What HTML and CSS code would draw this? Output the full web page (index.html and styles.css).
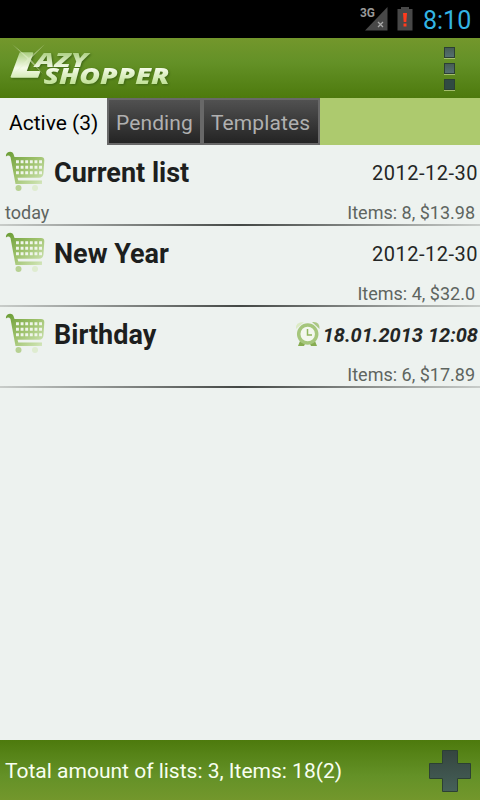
FILE: index.html
```
<!DOCTYPE html>
<html lang="en">
<head>
    <meta charset="UTF-8">
    <meta name="viewport" content="width=device-width, initial-scale=1.0">
    <title>Lazy Shopper</title>
    <link rel="stylesheet" href="styles.css">
</head>
<body>
    <!-- shared icons -->
    <svg class="defs" width="0" height="0">
        <defs>
            <linearGradient id="cartFill" gradientUnits="userSpaceOnUse" x1="4" y1="2" x2="38" y2="42">
                <stop offset="0" stop-color="#6fa03a"/>
                <stop offset="0.4" stop-color="#9cc069"/>
                <stop offset="0.75" stop-color="#c5dda6"/>
                <stop offset="1" stop-color="#e9f2df"/>
            </linearGradient>
            <linearGradient id="metal" x1="0" y1="0" x2="0" y2="1">
                <stop offset="0" stop-color="#35453f"/>
                <stop offset="1" stop-color="#466059"/>
            </linearGradient>
        </defs>
        <symbol id="cart" viewBox="0 0 40 40">
            <path d="M1 5.500C0 1 7 -1 8.500 3L9.500 6H36Q39.500 6 39.300 9.500L38.500 22Q38.300 26.500 34 26.800H12.500L13.300 29.500H37V33H10.500L5.500 6Q3.500 3.500 1 5.500Z" fill="url(#cartFill)"/>
            <path d="M11 10.700H37M11 16.200H37M11 21.700H37" stroke="#f0f5ec" stroke-width="2.900" stroke-dasharray="2.900 1.720"/>
            <circle cx="13.500" cy="37" r="3" fill="#b7d193"/>
            <circle cx="30" cy="37" r="3" fill="#dfecd0"/>
        </symbol>
    </svg>

    <div class="screen">
        <!-- status bar -->
        <div class="status-bar">
            <svg class="signal" width="30" height="26" viewBox="0 0 30 26">
                <text class="network" x="0" y="10" textLength="15" lengthAdjust="spacingAndGlyphs">3G</text>
                <path d="M27.500 0V23.500H5Z" fill="#484848"/>
                <path d="M18 15L23 20M23 15L18 20" stroke="#aaa" stroke-width="1.300"/>
            </svg>
            <svg class="battery" width="16" height="24" viewBox="0 0 16 24">
                <path d="M4 0H12V2H15.500V23.500H.500V2H4Z" fill="#484848"/>
                <path d="M6 6H10L9.300 15H6.700ZM6.500 16.500H9.500V19.500H6.500Z" fill="#ff3b1d"/>
            </svg>
            <span class="clock">8:10</span>
        </div>

        <!-- header -->
        <div class="header">
            <svg class="logo" width="180" height="60" viewBox="0 0 180 60">
                <defs>
                    <linearGradient id="logoFill" gradientUnits="userSpaceOnUse" x1="0" y1="12" x2="0" y2="48">
                        <stop offset="0" stop-color="#a0c870"/>
                        <stop offset="0.5" stop-color="#f5fbea"/>
                        <stop offset="1" stop-color="#b9dd8a"/>
                    </linearGradient>
                </defs>
                <g class="logo-text">
                    <text class="logo-initial" x="11" y="39" textLength="31" lengthAdjust="spacingAndGlyphs">L</text>
                    <text class="logo-top" x="35" y="29" textLength="53" lengthAdjust="spacingAndGlyphs">AZY</text>
                    <text class="logo-bottom" x="43.500" y="46" textLength="126" lengthAdjust="spacingAndGlyphs">SHOPPER</text>
                </g>
                <path d="M12 6L29 20L45 6L30.500 21L43 36L29 22.500L15 35L27.500 21Z" fill="#e6f2cf" opacity=".5"/>
            </svg>
            <div class="menu">
                <i></i>
                <i></i>
                <i></i>
            </div>
        </div>

        <!-- tabs -->
        <div class="tabs">
            <div class="tab active">Active (3)</div>
            <div class="tab pending">Pending</div>
            <div class="tab templates">Templates</div>
        </div>

        <!-- shopping lists -->
        <div class="lists">
            <div class="list">
                <div class="list-main">
                    <svg class="cart" width="40" height="40"><use href="#cart"/></svg>
                    <span class="name">Current list</span>
                    <span class="date">2012-12-30</span>
                </div>
                <div class="list-info">
                    <span class="day">today</span>
                    <span class="total">Items: 8, $13.98</span>
                </div>
            </div>
            <div class="list">
                <div class="list-main">
                    <svg class="cart" width="40" height="40"><use href="#cart"/></svg>
                    <span class="name">New Year</span>
                    <span class="date">2012-12-30</span>
                </div>
                <div class="list-info">
                    <span class="total">Items: 4, $32.0</span>
                </div>
            </div>
            <div class="list">
                <div class="list-main">
                    <svg class="cart" width="40" height="40"><use href="#cart"/></svg>
                    <span class="name">Birthday</span>
                    <svg class="alarm" width="26" height="28" viewBox="0 0 26 28">
                        <path d="M1 9Q0 2 9 2Z" fill="#dcebc5"/>
                        <path d="M17 2Q25 1 24.500 9Z" fill="#abc784"/>
                        <path d="M5 21L3 26H9L10 24ZM20 21L22 26H16L15 24Z" fill="#86ac50"/>
                        <circle cx="12.700" cy="14" r="9" fill="#f3f7ee" stroke="#a5c67b" stroke-width="3.500"/>
                        <path d="M12.500 9V15H17" fill="none" stroke="#91b75e" stroke-width="1.500"/>
                    </svg>
                    <span class="date reminder">18.01.2013 12:08</span>
                </div>
                <div class="list-info">
                    <span class="total">Items: 6, $17.89</span>
                </div>
            </div>
        </div>

        <!-- footer -->
        <div class="footer">
            <span class="summary">Total amount of lists: 3, Items: 18(2)</span>
            <svg class="add" width="44" height="44" viewBox="0 0 44 44">
                <path d="M15 2H30V15H43V30H30V43H15V30H1V15H15Z" fill="#a3bd6b" opacity=".6"/>
                <path d="M14.500 1.500H29.500V14.500H42.500V29.500H29.500V42.500H14.500V29.500H1.500V14.500H14.500Z" fill="url(#metal)" stroke="#2c4034"/>
            </svg>
        </div>
    </div>
</body>
</html>
```
FILE: styles.css
```
body {
    margin: 0;
    font-family: Roboto, sans-serif;
    background-color: #edf2ef;
}

.defs {
    position: absolute;
}

.screen {
    width: 480px;
    height: 800px;
    display: flex;
    flex-direction: column;
    overflow: hidden;
    white-space: nowrap;
}

/* status bar */
.status-bar {
    height: 38px;
    display: flex;
    justify-content: flex-end;
    align-items: center;
    box-sizing: border-box;
    padding-right: 9px;
    background-color: #000;
}

.signal {
    margin-top: 1px;
}

.network {
    font-size: 13px;
    font-weight: bold;
    fill: #999;
}

.battery {
    margin: 0 10px 0 7px;
}

.clock {
    width: 48px;
    padding-top: 3px;
    font-size: 25px;
    line-height: 35px;
    color: #33b5e5;
}

/* header */
.header {
    height: 60px;
    display: flex;
    justify-content: space-between;
    background: linear-gradient(#73972c, #649127 40%, #4d7a0d);
}

.logo-text {
    font-family: "Open Sans", sans-serif;
    font-weight: 800;
    font-style: italic;
    fill: url(#logoFill);
    filter: drop-shadow(1px 1px 1px #3d6515);
}

.logo-initial {
    font-size: 33px;
    stroke: url(#logoFill);
    stroke-width: 1.5px;
    stroke-linejoin: round;
}

.logo-top {
    font-size: 20px;
}

.logo-bottom {
    font-size: 22px;
}

.menu {
    display: flex;
    flex-direction: column;
    gap: 5px;
    padding: 9px 25px 0 0;
}

.menu i {
    width: 9px;
    height: 9px;
    border: 1px solid #2c4034;
    box-shadow: 0 1px 0 #a3bd6b;
    background: linear-gradient(#465d55, #557070);
}

.menu i:last-child {
    background: #304a43;
}

/* tabs */
.tabs {
    height: 47px;
    display: flex;
    background-color: #adca6e;
}

.tab {
    box-sizing: border-box;
    padding-left: 7px;
    border: 2px solid #686868;
    font-size: 21px;
    line-height: 47px;
    color: #b0b0b0;
    background: linear-gradient(#515151, #242424);
}

.tab.active {
    width: 107px;
    padding-left: 9px;
    border: none;
    line-height: 51px;
    color: #000;
    background: #edf2ef;
}

.pending {
    width: 95px;
}

.templates {
    width: 118px;
}

.tab.pending,
.tab.templates {
    letter-spacing: 0.1px;
}

/* lists */
.lists {
    flex: 1;
}

.list {
    height: 81px;
    display: flex;
    flex-direction: column;
    box-sizing: border-box;
    border-bottom: 2px solid;
    border-image: linear-gradient(90deg, #c9cdca, #444845 50%, #c9cdca) 1;
}

.list-main {
    height: 56px;
    flex-shrink: 0;
    display: flex;
    align-items: center;
    padding: 0 3px 0 5px;
}

.cart {
    margin: -4px 9px 0 0;
}

.name {
    flex: 1;
    font-size: 27px;
    font-weight: bold;
    color: #1d1f1e;
}

.date {
    margin-right: -1px;
    font-size: 20px;
    letter-spacing: 0.5px;
    color: #242625;
}

.date.reminder {
    font-weight: bold;
    font-style: italic;
    letter-spacing: 0;
}

.alarm {
    margin: -2px 2px 0 0;
}

.list-info {
    display: flex;
    padding: 0 5px;
    font-size: 18px;
    line-height: 24px;
    color: #5e655f;
}

.total {
    margin-left: auto;
}

/* footer */
.footer {
    height: 60px;
    display: flex;
    justify-content: space-between;
    align-items: center;
    padding: 0 8px 0 5px;
    background: linear-gradient(#4d7a0d, #649127 60%, #73972c);
}

.summary {
    padding-top: 2px;
    font-size: 21px;
    color: #f8fff0;
}

.add {
    margin-top: 2px;
}
```
